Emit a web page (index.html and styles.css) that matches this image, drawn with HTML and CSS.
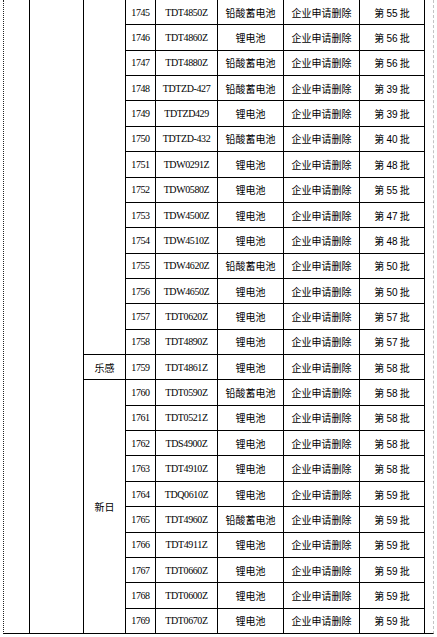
FILE: index.html
```html
<!DOCTYPE html>
<html lang="zh-CN">
<head>
<meta charset="utf-8">
<title>删除目录</title>
<link rel="stylesheet" href="styles.css">
</head>
<body>
<div class="page">
  <div class="grid">
    <div class="cell c1"></div>
    <div class="cell c2"></div>
    <div class="cell c3 g1"></div>
    <div class="cell c3 g2 zh">乐感</div>
    <div class="cell c3 g3 zh">新日</div>

    <div class="cell num">1745</div><div class="cell mono">TDT4850Z</div><div class="cell zh">铅酸蓄电池</div><div class="cell zh">企业申请删除</div><div class="cell zh"><span>第 <span class="d">55</span> 批</span></div>
    <div class="cell num">1746</div><div class="cell mono">TDT4860Z</div><div class="cell zh">锂电池</div><div class="cell zh">企业申请删除</div><div class="cell zh"><span>第 <span class="d">56</span> 批</span></div>
    <div class="cell num">1747</div><div class="cell mono">TDT4880Z</div><div class="cell zh">铅酸蓄电池</div><div class="cell zh">企业申请删除</div><div class="cell zh"><span>第 <span class="d">56</span> 批</span></div>
    <div class="cell num">1748</div><div class="cell mono">TDTZD-427</div><div class="cell zh">铅酸蓄电池</div><div class="cell zh">企业申请删除</div><div class="cell zh"><span>第 <span class="d">39</span> 批</span></div>
    <div class="cell num">1749</div><div class="cell mono">TDTZD429</div><div class="cell zh">锂电池</div><div class="cell zh">企业申请删除</div><div class="cell zh"><span>第 <span class="d">39</span> 批</span></div>
    <div class="cell num">1750</div><div class="cell mono">TDTZD-432</div><div class="cell zh">铅酸蓄电池</div><div class="cell zh">企业申请删除</div><div class="cell zh"><span>第 <span class="d">40</span> 批</span></div>
    <div class="cell num">1751</div><div class="cell mono">TDW0291Z</div><div class="cell zh">锂电池</div><div class="cell zh">企业申请删除</div><div class="cell zh"><span>第 <span class="d">48</span> 批</span></div>
    <div class="cell num">1752</div><div class="cell mono">TDW0580Z</div><div class="cell zh">锂电池</div><div class="cell zh">企业申请删除</div><div class="cell zh"><span>第 <span class="d">55</span> 批</span></div>
    <div class="cell num">1753</div><div class="cell mono">TDW4500Z</div><div class="cell zh">锂电池</div><div class="cell zh">企业申请删除</div><div class="cell zh"><span>第 <span class="d">47</span> 批</span></div>
    <div class="cell num">1754</div><div class="cell mono">TDW4510Z</div><div class="cell zh">锂电池</div><div class="cell zh">企业申请删除</div><div class="cell zh"><span>第 <span class="d">48</span> 批</span></div>
    <div class="cell num">1755</div><div class="cell mono">TDW4620Z</div><div class="cell zh">铅酸蓄电池</div><div class="cell zh">企业申请删除</div><div class="cell zh"><span>第 <span class="d">50</span> 批</span></div>
    <div class="cell num">1756</div><div class="cell mono">TDW4650Z</div><div class="cell zh">锂电池</div><div class="cell zh">企业申请删除</div><div class="cell zh"><span>第 <span class="d">50</span> 批</span></div>
    <div class="cell num">1757</div><div class="cell mono">TDT0620Z</div><div class="cell zh">锂电池</div><div class="cell zh">企业申请删除</div><div class="cell zh"><span>第 <span class="d">57</span> 批</span></div>
    <div class="cell num">1758</div><div class="cell mono">TDT4890Z</div><div class="cell zh">锂电池</div><div class="cell zh">企业申请删除</div><div class="cell zh"><span>第 <span class="d">57</span> 批</span></div>
    <div class="cell num">1759</div><div class="cell mono">TDT4861Z</div><div class="cell zh">锂电池</div><div class="cell zh">企业申请删除</div><div class="cell zh"><span>第 <span class="d">58</span> 批</span></div>
    <div class="cell num">1760</div><div class="cell mono">TDT0590Z</div><div class="cell zh">铅酸蓄电池</div><div class="cell zh">企业申请删除</div><div class="cell zh"><span>第 <span class="d">58</span> 批</span></div>
    <div class="cell num">1761</div><div class="cell mono">TDT0521Z</div><div class="cell zh">锂电池</div><div class="cell zh">企业申请删除</div><div class="cell zh"><span>第 <span class="d">58</span> 批</span></div>
    <div class="cell num">1762</div><div class="cell mono">TDS4900Z</div><div class="cell zh">锂电池</div><div class="cell zh">企业申请删除</div><div class="cell zh"><span>第 <span class="d">58</span> 批</span></div>
    <div class="cell num">1763</div><div class="cell mono">TDT4910Z</div><div class="cell zh">锂电池</div><div class="cell zh">企业申请删除</div><div class="cell zh"><span>第 <span class="d">58</span> 批</span></div>
    <div class="cell num">1764</div><div class="cell mono">TDQ0610Z</div><div class="cell zh">锂电池</div><div class="cell zh">企业申请删除</div><div class="cell zh"><span>第 <span class="d">59</span> 批</span></div>
    <div class="cell num">1765</div><div class="cell mono">TDT4960Z</div><div class="cell zh">铅酸蓄电池</div><div class="cell zh">企业申请删除</div><div class="cell zh"><span>第 <span class="d">59</span> 批</span></div>
    <div class="cell num">1766</div><div class="cell mono">TDT4911Z</div><div class="cell zh">锂电池</div><div class="cell zh">企业申请删除</div><div class="cell zh"><span>第 <span class="d">59</span> 批</span></div>
    <div class="cell num">1767</div><div class="cell mono">TDT0660Z</div><div class="cell zh">锂电池</div><div class="cell zh">企业申请删除</div><div class="cell zh"><span>第 <span class="d">59</span> 批</span></div>
    <div class="cell num">1768</div><div class="cell mono">TDT0600Z</div><div class="cell zh">锂电池</div><div class="cell zh">企业申请删除</div><div class="cell zh"><span>第 <span class="d">59</span> 批</span></div>
    <div class="cell num">1769</div><div class="cell mono">TDT0670Z</div><div class="cell zh">锂电池</div><div class="cell zh">企业申请删除</div><div class="cell zh"><span>第 <span class="d">59</span> 批</span></div>
  </div>
</div>
</body>
</html>
```
FILE: styles.css
```css
html, body {
  margin: 0;
  padding: 0;
  background: #fff;
}
body {
  width: 437px;
  height: 637px;
  overflow: hidden;
}
.page {
  margin-left: 3px;
  width: 429px;
  height: 633px;
  border-left: 1px dotted #222;
  border-right: 1px dashed #c4c4c4;
  border-bottom: 1px solid #000;
}
.grid {
  width: 420px;
  height: 633px;
  padding-right: 1px;
  background: #000;
  display: grid;
  grid-template-columns: 25px 53px 41px 29px 61px 65px 75px 64px;
  grid-template-rows: repeat(25, 1fr);
  gap: 1px;
}
.cell {
  background: #fff;
  display: flex;
  align-items: center;
  justify-content: center;
  color: #000;
  white-space: pre;
  overflow: hidden;
}
.c1 { grid-column: 1; grid-row: 1 / -1; }
.c2 { grid-column: 2; grid-row: 1 / -1; }
.c3 { grid-column: 3; }
.g1 { grid-row: 1 / 15; }
.g2 { grid-row: 15 / 16; }
.g3 { grid-row: 16 / 26; }
.zh {
  font-family: "Noto Sans CJK SC", sans-serif;
  font-size: 10px;
}
.d {
  font-family: "Liberation Sans", sans-serif;
  font-size: 10px;
}
.num, .mono {
  font-family: "Liberation Serif", "Times New Roman", serif;
  font-size: 10px;
  letter-spacing: -0.4px;
}
```
